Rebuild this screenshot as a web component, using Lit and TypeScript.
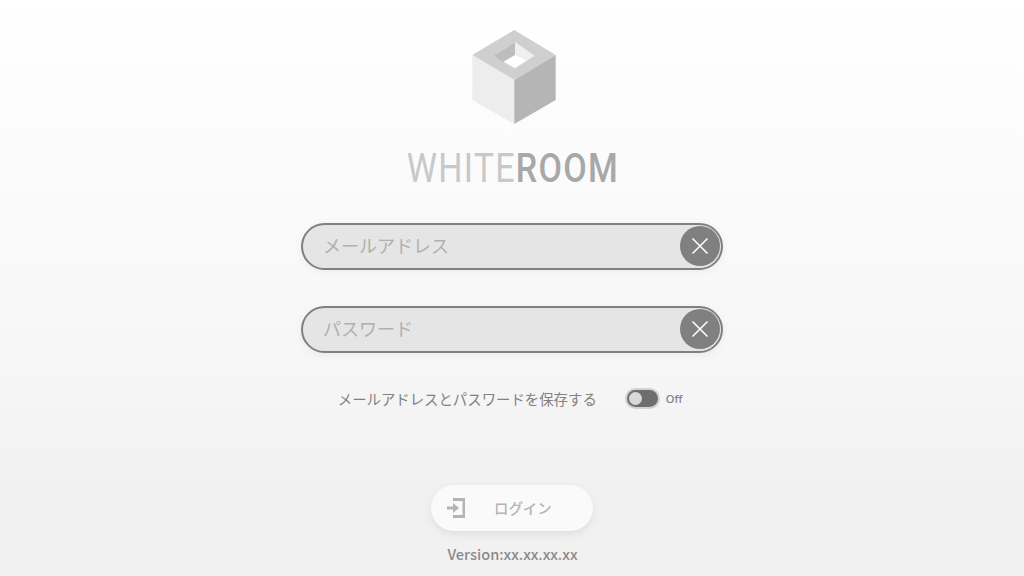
import { css, html, LitElement } from "lit";
import { customElement, property } from "lit/decorators.js";

@customElement("clear-field")
export class ClearField extends LitElement {
  static styles = css`
    :host {
      display: block;
    }
    .field {
      box-sizing: border-box;
      width: 422px;
      height: 47px;
      padding: 0 1px 1px 20px;
      display: flex;
      align-items: center;
      border: 2px solid #808080;
      border-radius: 24px;
      background: #e5e5e5;
      box-shadow: 0 2px 8px rgba(0, 0, 0, 0.05);
    }
    input {
      flex: 1;
      min-width: 0;
      border: 0;
      padding: 0 0 2px;
      outline: 0;
      background: transparent;
      font: 18px "Noto Sans CJK JP", "Noto Sans", sans-serif;
      color: #666;
    }
    input::placeholder {
      color: #b0b0b0;
      opacity: 1;
    }
    button {
      width: 40px;
      height: 40px;
      padding: 0;
      border: 0;
      border-radius: 50%;
      background: #808080;
      display: grid;
      place-items: center;
    }
  `;

  @property() placeholder = "";

  render() {
    return html`<div class="field">
      <input placeholder=${this.placeholder} />
      <button aria-label="clear">
        <svg width="18" height="18" viewBox="0 0 18 18" fill="none" stroke="#fff" stroke-width="1.5">
          <path d="M1.5 1.5 16.5 16.5M16.5 1.5 1.5 16.5" />
        </svg>
      </button>
    </div>`;
  }
}

@customElement("app-root")
export class AppRoot extends LitElement {
  static styles = css`
    :host {
      display: flex;
      flex-direction: column;
      align-items: center;
      height: 576px;
      overflow: hidden;
      background: linear-gradient(#fff 0%, #fafafa 36%, #f7f7f7 60%, #f1f1f1 85%);
      font-family: "Noto Sans CJK JP", "Noto Sans", sans-serif;
    }
    .cube {
      display: block;
      margin-top: 29px;
      margin-left: 4px;
    }
    .wordmark {
      margin-top: 21px;
      margin-left: 1px;
      height: 44px;
      font: 400 41px/44px Roboto, "Noto Sans", sans-serif;
      letter-spacing: 1.5px;
      color: #c8c8c8;
      transform: scaleX(0.83);
      white-space: nowrap;
    }
    .wordmark b {
      font-weight: 500;
      color: #a8a8a8;
    }
    .fields {
      margin-top: 33px;
      display: flex;
      flex-direction: column;
      gap: 36px;
    }
    .save {
      margin-top: 31px;
      margin-left: -4px;
      height: 28px;
      display: flex;
      align-items: center;
      font-size: 14.4px;
      color: #828282;
    }
    .toggle {
      margin-left: 30px;
      box-sizing: border-box;
      width: 31px;
      height: 17px;
      padding: 2px;
      border-radius: 9px;
      background: #6e6e6e;
      box-shadow: 0 0 0 2px #d2d2d2;
      display: flex;
      align-items: center;
    }
    .toggle i {
      width: 13px;
      height: 13px;
      border-radius: 50%;
      background: #d8d8d8;
    }
    .off {
      margin-left: 8px;
      padding-top: 1px;
      font: 500 11px "Noto Sans", sans-serif;
      color: #808080;
    }
    .login {
      margin-top: 73px;
      box-sizing: border-box;
      width: 162px;
      height: 46px;
      padding: 0 0 0 15px;
      border: 0;
      border-radius: 23px;
      background: #fafafa;
      box-shadow: 0 3px 9px rgba(0, 0, 0, 0.08);
      display: flex;
      align-items: center;
      font: 500 14.4px "Noto Sans CJK JP", sans-serif;
      color: #b4b4b4;
    }
    .login span {
      margin-left: 28px;
      padding-bottom: 2px;
    }
    .version {
      margin-top: 12px;
      margin-left: 1px;
      font: 500 14.6px/22px "Noto Sans CJK JP", "Noto Sans", sans-serif;
      color: #8a8a8a;
    }
  `;

  render() {
    return html`
      <svg class="cube" width="86" height="96" viewBox="471 29 86 96">
        <path d="M514.3 30 555.7 55 514.3 80 472.3 55Z" fill="#cfcfcf" />
        <path d="M472.3 55 514.3 80V124L472.3 100Z" fill="#ededed" />
        <path d="M514.3 80 555.7 55V100L514.3 124Z" fill="#b5b5b5" />
        <path d="M515 42.3 534.3 55.7 515 68.3 493.3 55.7Z" fill="#fff" />
        <path d="M515 42.3V55L503 62 493.3 55.7Z" fill="#bdbdbd" />
        <path d="M515 42.3 534.3 55.7 526.5 60.5 515 55Z" fill="#efefef" />
      </svg>
      <div class="wordmark">WHITE<b>ROOM</b></div>
      <div class="fields">
        <clear-field placeholder="メールアドレス"></clear-field>
        <clear-field placeholder="パスワード"></clear-field>
      </div>
      <div class="save">
        メールアドレスとパスワードを保存する
        <div class="toggle"><i></i></div>
        <span class="off">Off</span>
      </div>
      <button class="login">
        <svg width="20" height="22" viewBox="0 0 20 22" fill="#b4b4b4">
          <path d="M7 1H19V21H7V18H16.5V4H7Z" />
          <path d="M1 9.5H7V6L13 11 7 16V12.5H1Z" />
        </svg>
        <span>ログイン</span>
      </button>
      <div class="version">Version:xx.xx.xx.xx</div>
    `;
  }
}
